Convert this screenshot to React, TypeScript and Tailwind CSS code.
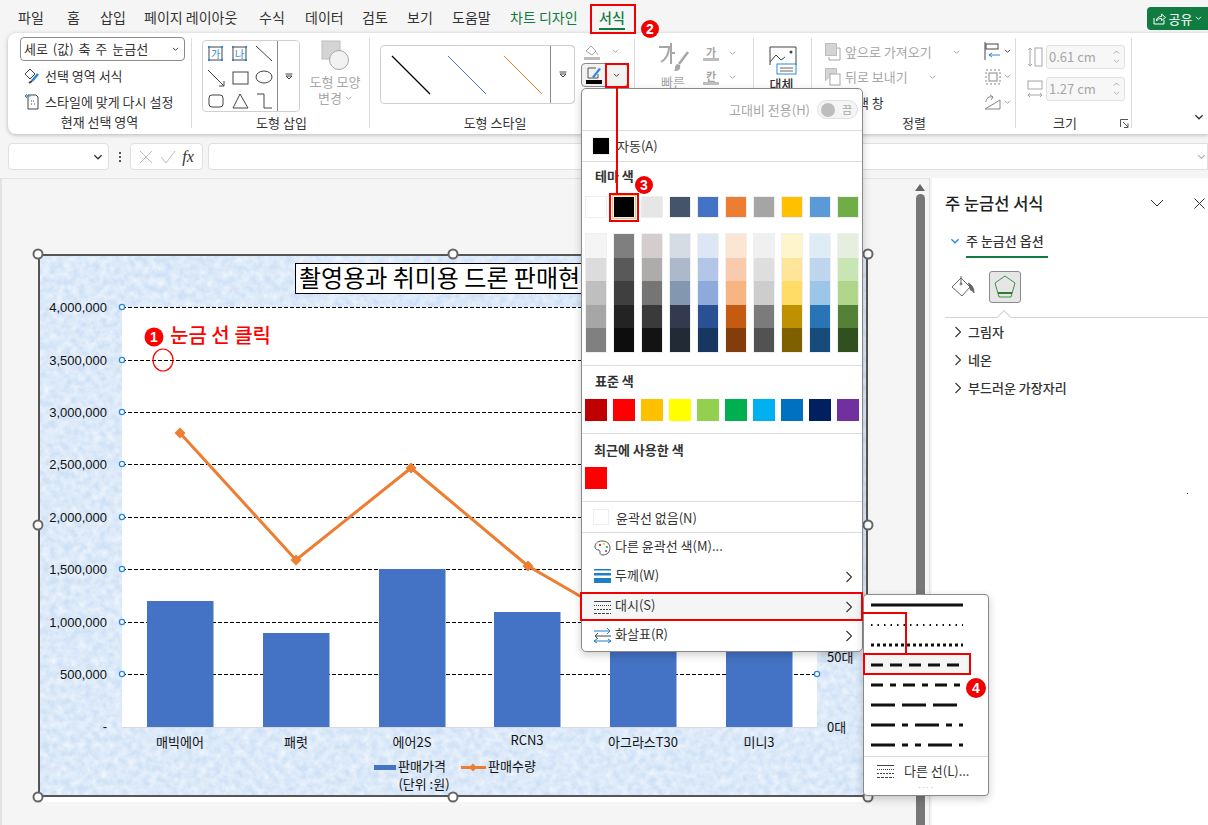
import React from "react";

const TINTS = [
  ["#f5f5f5", "#dcdcdc", "#bfbfbf", "#a6a6a6", "#808080"],
  ["#7f7f7f", "#595959", "#3f3f3f", "#232323", "#0d0d0d"],
  ["#d5cdcd", "#aeabab", "#757575", "#3a3a3a", "#131313"],
  ["#d6dce4", "#adb9ca", "#8497b0", "#333a4f", "#222b35"],
  ["#dce6f5", "#b4c6e7", "#8eaadb", "#2a5094", "#173660"],
  ["#fde5d5", "#f7cbac", "#f8b584", "#c55a11", "#833c0b"],
  ["#f0f0f0", "#dedede", "#cdcdcd", "#7b7b7b", "#525252"],
  ["#fff5cc", "#ffe599", "#ffdc66", "#bf9000", "#7f6000"],
  ["#deecf6", "#bdd6ee", "#9cc6e8", "#2874b5", "#174b7c"],
  ["#e6efdf", "#c8e6b3", "#b0d68b", "#538135", "#305020"],
];
const THEME = ["#ffffff", "#000000", "#e7e6e6", "#44546a", "#4472c4", "#ed7d31", "#a5a5a5", "#ffc000", "#5b9bd5", "#70ad47"];
const STD = ["#c00000", "#ff0000", "#ffc000", "#ffff00", "#92d050", "#00b050", "#00b0f0", "#0070c0", "#002060", "#7030a0"];
const TABS: [string, string][] = [
  ["파일", "w-[49px]"], ["홈", "w-[33px]"], ["삽입", "w-[44px]"], ["페이지 레이아웃", "w-[115px]"], ["수식", "w-[46px]"],
  ["데이터", "w-[57px]"], ["검토", "w-[45px]"], ["보기", "w-[45px]"], ["도움말", "w-[58px]"],
];

const Chev = ({ c = "#666", w = 8 }: { c?: string; w?: number }) => (
  <svg width={w} height={w * 0.6} viewBox="0 0 8 5" className="shrink-0">
    <path d="M1 1l3 3 3-3" fill="none" stroke={c} strokeWidth="1.1" />
  </svg>
);
const Right = () => (
  <svg width="8" height="12" viewBox="0 0 8 12" className="shrink-0">
    <path d="M1.5 1l5 5-5 5" fill="none" stroke="#333" strokeWidth="1.1" />
  </svg>
);
const Badge = ({ n, className }: { n: string; className: string }) => (
  <div className={`absolute w-[18px] h-[18px] rounded-full bg-[#f00000] text-white text-[14px] font-bold leading-[18px] text-center ${className}`} style={{ fontFamily: "'Liberation Sans',sans-serif" }}>
    {n}
  </div>
);
const Label = ({ children, w }: { children: React.ReactNode; w?: string }) => (
  <div className={`h-4 leading-4 text-center text-[13px] text-[#333] shrink-0 ${w ?? ""}`}>{children}</div>
);

const MoreBtn = ({ className }: { className: string }) => (
  <div className={`border border-[#8a8a8a] rounded-r-[4px] flex items-center justify-center bg-white ${className}`}>
    <svg width="8" height="7" viewBox="0 0 8 7"><path d="M0.5 1h7" stroke="#444" /><path d="M1 3l3 3 3-3z" fill="none" stroke="#444" /></svg>
  </div>
);

const ShapeGallery = () => (
  <svg width="74" height="72" viewBox="203 40 74 72" className="shrink-0">
    <g fill="none" stroke="#444" strokeWidth="1">
      <rect x="209" y="46" width="13" height="13" /><rect x="233" y="46" width="13" height="13" />
      <path d="M256 45l16 15" />
      <path d="M208 69l16 16" /><path d="M224 85v-5M224 85h-5" />
      <rect x="233" y="71" width="15" height="12" />
      <ellipse cx="264" cy="76" rx="8" ry="6" />
      <rect x="209" y="94" width="14" height="12" rx="3" />
      <path d="M240 93l-7 14h15z" />
      <path d="M257 93h7v14h8" />
    </g>
    <g fill="#2b88d8">
      {[[209, 46], [222, 46], [209, 59], [222, 59], [233, 46], [246, 46], [233, 59], [246, 59]].map(([x, y], i) => (
        <rect key={i} x={x - 1} y={y - 1} width="2" height="2" />
      ))}
    </g>
    <text x="215.500" y="56.500" fontSize="10" fill="#2b88d8" textAnchor="middle">가</text>
    <text x="239.500" y="56.500" fontSize="10" fill="#2b88d8" textAnchor="middle">나</text>
  </svg>
);

const ChartSvg = () => {
  const grid = [307, 360, 412, 464, 517, 569, 622, 674];
  const labels = ["4,000,000", "3,500,000", "3,000,000", "2,500,000", "2,000,000", "1,500,000", "1,000,000", "500,000"];
  const bars = [[147, 601, "매빅에어", 180], [263, 633, "패럿", 296], [379, 569, "에어2S", 412], [494, 612, "RCN3", 527], [610, 640, "아그라스T30", 643], [726, 640, "미니3", 759]] as const;
  const pts = [[180, 433], [296, 560], [411, 468], [528, 566], [644, 633]];
  return (
    <svg width="830" height="543" viewBox="38 254 830 543" className="block">
      <defs>
        <filter id="tex" x="0" y="0" width="100%" height="100%">
          <feTurbulence type="fractalNoise" baseFrequency="0.14" numOctaves="3" seed="7" />
          <feColorMatrix values="0 0 0 0 1  0 0 0 0 1  0 0 0 0 1  1.0 0 0 0 -0.2" />
        </filter>
      </defs>
      <rect x="38" y="254" width="830" height="543" fill="#cde0f6" />
      <rect x="38" y="254" width="830" height="543" filter="url(#tex)" />
      <rect x="122" y="307" width="695" height="420" fill="#fff" />
      <g stroke="#000" strokeWidth="1" strokeDasharray="4 2">
        {grid.map((y) => <line key={y} x1="122" x2="817" y1={y + 0.5} y2={y + 0.5} />)}
      </g>
      <line x1="122" x2="817" y1="727.500" y2="727.500" stroke="#d9d9d9" />
      {bars.map(([x, y]) => <rect key={x} x={x} y={y} width="66.500" height={727 - y} fill="#4472c4" />)}
      <polyline points={pts.map((p) => p.join(",")).join(" ")} fill="none" stroke="#ed7d31" strokeWidth="3" />
      {pts.map(([x, y]) => <path key={x} d={`M${x} ${y - 5.5}l5.5 5.5-5.500 5.500-5.500-5.500z`} fill="#ed7d31" />)}
      <g fontSize="13" fill="#111" textAnchor="end" fontFamily="'Liberation Sans',sans-serif">
        {labels.map((l, i) => <text key={l} x="107" y={grid[i] + 5}>{l}</text>)}
        <text x="107" y="731">-</text>
      </g>
      <g fill="#fff" stroke="#2b88d8" strokeWidth="1.300">
        {grid.map((y) => <circle key={y} cx="122" cy={y} r="2.600" />)}
        <circle cx="817" cy="674" r="2.600" />
      </g>
      <g fontSize="13" fill="#111" textAnchor="middle" fontFamily="'Noto Sans CJK KR',sans-serif">
        {bars.map(([x, , t, c]) => <text key={x} x={c} y={t === "RCN3" ? 745 : 747}>{t}</text>)}
        <text x="422" y="771">판매가격</text>
        <text x="424" y="789">(단위 :원)</text>
        <text x="512" y="771">판매수량</text>
      </g>
      <g fontSize="13" fill="#111" fontFamily="'Noto Sans CJK KR',sans-serif">
        <text x="827" y="662">50대</text>
        <text x="827" y="732">0대</text>
      </g>
      <rect x="374" y="765" width="22" height="5" fill="#4472c4" />
      <rect x="461" y="766" width="25" height="3" fill="#ed7d31" />
      <path d="M473 763.500l4 4-4 4-4-4z" fill="#ed7d31" />
      <rect x="295.500" y="263.500" width="330" height="30" fill="#fff" stroke="#000" />
      <text x="299" y="287" fontSize="24" fill="#000" fontFamily="'Noto Sans CJK KR',sans-serif">촬영용과 취미용 드론 판매현황</text>
      <circle cx="154" cy="337" r="9.500" fill="#f00" />
      <text x="154" y="342" fontSize="14" fontWeight="700" fill="#fff" textAnchor="middle" fontFamily="'Liberation Sans',sans-serif">1</text>
      <text x="170" y="343" fontSize="20" fontWeight="500" fill="#f00" fontFamily="'Noto Sans CJK KR',sans-serif">눈금 선 클릭</text>
      <ellipse cx="163" cy="360" rx="10" ry="11" fill="none" stroke="#f00" strokeWidth="1.200" />
      <rect x="39" y="255" width="828" height="541" fill="none" stroke="#555" strokeWidth="2" />
    </svg>
  );
};

const Handle = ({ className }: { className: string }) => (
  <div className={`absolute w-[11px] h-[11px] rounded-full bg-white border-2 border-[#666] -translate-x-1/2 -translate-y-1/2 ${className}`} />
);

const Dash = ({ d, w = 3 }: { d?: string; w?: number }) => (
  <div className="h-5 flex items-center pl-[6px]">
    <svg width="94" height="4" viewBox="0 0 94 4"><line x1="1" x2="93" y1="2" y2="2" stroke="#111" strokeWidth={w} strokeDasharray={d} /></svg>
  </div>
);

const MenuRow = ({ icon, text, arrow, hi }: { icon: React.ReactNode; text: string; arrow?: boolean; hi?: boolean }) => (
  <div className={`h-[29.500px] flex items-center pl-[12px] pr-[9px] text-[13px] text-[#333] ${hi ? "bg-[#f5f5f5]" : ""}`}>
    <div className="w-[21px] flex justify-start shrink-0">{icon}</div>
    <span className="-mt-[4px] flex-1">{text}</span>
    {arrow && <Right />}
  </div>
);

const DashIcon = () => (
  <svg width="17" height="14" viewBox="0 0 17 14"><g stroke="#444"><path d="M0 1.500h17" /><path d="M0 5.500h17" strokeDasharray="1 1" /><path d="M0 9.500h17" strokeDasharray="2 1" /><path d="M0 13.500h17" strokeDasharray="3 1" /></g></svg>
);

export default function App() {
  return (
    <div className="relative w-[1208px] h-[825px] overflow-hidden bg-[#f5f5f5] text-[#333] text-[13px]" style={{ fontFamily: "'Noto Sans CJK KR','Noto Sans',sans-serif" }}>
      {/* tabs */}
      <div className="h-[33px] flex items-start text-[14px] pl-[18px] pt-[8px] leading-[19px]">
        {TABS.map(([t, w]) => <span key={t} className={`text-[#333] whitespace-nowrap ${w}`}>{t}</span>)}
        <span className="text-[#107c41] w-[89px] whitespace-nowrap">차트 디자인</span>
        <div className="relative text-[#107c41] font-medium">
          서식
          <div className="h-[2px] bg-[#107c41] mt-[1px]" />
        </div>
        <div className="ml-auto -mt-[1px] w-[61px] h-[23px] bg-[#107c41] rounded-l-[4px] flex items-center justify-center gap-[3px] text-white text-[13px]">
          <svg width="13" height="13" viewBox="0 0 13 13" fill="none" stroke="#fff"><path d="M1 6v6h10V8" /><path d="M3.500 9c0-3 2-4.500 5-4.500V2l4 3.500-4 3V6.500c-2 0-4 .5-5 2.500z" /></svg>
          공유
          <Chev c="#fff" w={7} />
        </div>
      </div>

      {/* ribbon */}
      <div className="ml-[8px] h-[101px] bg-white rounded-l-[8px] shadow-[0_1px_4px_rgba(0,0,0,0.25)] flex pt-[5px]">
        <div className="w-[184px] h-[90px] border-r border-[#dcdcdc] flex flex-col">
          <div className="h-[77px] shrink-0 pl-[12px] flex flex-col -mt-[1px]">
            <div className="w-[165px] h-[24px] border border-[#8a8a8a] rounded-[4px] flex items-center justify-between px-[3px] pr-[5px] text-[13px] shrink-0">
              <span className="[word-spacing:2px]">세로 (값) 축 주 눈금선</span><Chev c="#333" w={7} />
            </div>
            <div className="h-[26px] mt-[2px] flex items-center gap-[5px] pl-[4px]">
              <svg width="16" height="16" viewBox="0 0 16 16" fill="none" stroke="#444"><path d="M1 6l5-5 5 5-5 5z" /><path d="M8 13l6-7" stroke="#2b88d8" strokeWidth="2.500" /><path d="M5 15l3-2" stroke="#444" strokeWidth="2" /></svg>
              <span>선택 영역 서식</span>
            </div>
            <div className="h-[26px] flex items-center gap-[5px] pl-[4px]">
              <svg width="16" height="18" viewBox="0 0 16 18" fill="none" stroke="#444"><path d="M4 3h8l2 2v12H4z" /><path d="M1 4h6M1 4l2-2M1 4l2 2" stroke="#2b88d8" /><path d="M7 9h4M7 12h1M10 12h2" strokeDasharray="1 1" /></svg>
              <span>스타일에 맞게 다시 설정</span>
            </div>
          </div>
          <Label>현재 선택 영역</Label>
        </div>

        <div className="w-[178px] h-[90px] border-r border-[#dcdcdc] flex flex-col">
          <div className="h-[77px] shrink-0 flex pl-[11px] pt-[2px]">
            <div className="w-[98px] h-[72px] flex rounded-[4px] border border-[#d0d0d0] overflow-hidden -ml-px">
              <ShapeGallery />
              <MoreBtn className="w-[24px] h-[72px] -mt-px shrink-0" />
            </div>
            <div className="w-[66px] ml-[2px] flex flex-col items-center text-[#a6a6a6]">
              <svg width="28" height="30" viewBox="0 0 28 30"><rect x="1" y="1" width="18" height="18" fill="#d4d4d4" stroke="#bdbdbd" /><circle cx="18" cy="20" r="9.500" fill="#f2f2f2" stroke="#a6a6a6" /></svg>
              <div className="leading-[16px] text-center mt-[4px] whitespace-nowrap flex flex-col items-center">
                <span>도형 모양</span>
                <span className="flex items-center gap-[3px]">변경 <Chev c="#aaa" w={7} /></span>
              </div>
            </div>
          </div>
          <Label w="w-[165px] pl-[14px]">도형 삽입</Label>
        </div>

        <div className="w-[265px] h-[90px] border-r border-[#dcdcdc] flex flex-col">
          <div className="h-[77px] shrink-0 flex pl-[10px] pt-[7px]">
            <div className="w-[195px] h-[59px] border border-[#d0d0d0] rounded-[4px] flex overflow-hidden">
              <svg width="170" height="57" viewBox="380 46 170 57" className="shrink-0">
                <path d="M391 56l38 38" stroke="#000" strokeWidth="1.300" />
                <path d="M447 56l38 38" stroke="#4472c4" />
                <path d="M503 56l38 38" stroke="#ed7d31" />
              </svg>
              <MoreBtn className="flex-1 -m-px" />
            </div>
            <div className="ml-[6px] w-[47px] -mt-[3px]">
              <div className="h-[19px] flex items-center gap-[12px] pl-[3px]">
                <svg width="16" height="16" viewBox="0 0 16 16" fill="none"><path d="M2 7l5-5 5 5-4 4z" stroke="#a6a6a6" /><path d="M12 8c1 1.500 2 3 1 3" stroke="#a6a6a6" /><rect y="13" width="16" height="3" fill="#bdbdbd" stroke="none" /></svg>
                <Chev c="#999" w={7} />
              </div>
              <div className="h-[24px] mt-[2px] w-[47px] border border-[#8a8a8a] rounded-[4px] flex bg-[#f2f2f2]">
                <div className="w-[23px] flex items-center justify-center">
                  <svg width="16" height="18" viewBox="0 0 16 18" fill="none"><path d="M2 2h8M2 2v10h10V8" stroke="#555" /><path d="M6 11l7-9 2 1-7 9z" fill="#2b88d8" /><rect y="14" width="16" height="4" fill="#000" /></svg>
                </div>
                <div className="flex-1 flex items-center justify-center"><Chev c="#333" w={7} /></div>
              </div>
            </div>
          </div>
          <Label w="w-[250px]">도형 스타일</Label>
        </div>

        <div className="w-[119px] h-[90px] border-r border-[#dcdcdc] flex text-[#a6a6a6] pl-[20px]">
          <div className="w-[36px] flex flex-col items-center pt-[4px]">
            <svg width="32" height="30" viewBox="0 0 32 30" fill="none" stroke="#a6a6a6" strokeWidth="2"><path d="M2 5h10c0 8-3 12-8 15M14 1v21M14 11h4" /><path d="M22 22l9-12" strokeWidth="2.500" /><path d="M17 29c5 0 7-2 6-6l-3-1c-3 2-1 5-3 7z" fill="#a6a6a6" stroke="none" /></svg>
            <span className="mt-[1px] leading-[18px]">빠른</span>
          </div>
          <div className="ml-[12px] pt-[6px] flex flex-col gap-[6px]">
            {["가", "칸"].map((t, i) => (
              <div key={i} className="h-[18px] flex items-center gap-[10px]">
                <div className="w-[16px] text-center leading-[12px] text-[11px] border-b-[3px] border-[#bdbdbd] font-bold">{t}</div>
                <Chev c="#999" w={7} />
              </div>
            ))}
          </div>
        </div>

        <div className="w-[58px] h-[90px] border-r border-[#dcdcdc] flex flex-col items-center pt-[7px] pr-[2px]">
          <svg width="30" height="30" viewBox="0 0 30 30" fill="none"><path d="M3 20V2h26v18h-8" stroke="#444" /><path d="M3 17l6-7 5 5 4-3" stroke="#444" /><circle cx="24" cy="7" r="1.500" fill="#444" /><rect x="10" y="19" width="19" height="10" fill="#fff" stroke="#2b88d8" /><path d="M13 23h13M13 26h13" stroke="#666" /></svg>
          <span className="mt-[1px] font-medium leading-[16px]">대체</span>
        </div>

        <div className="w-[204px] h-[90px] border-r border-[#dcdcdc] flex flex-col">
          <div className="h-[77px] shrink-0 flex text-[#a6a6a6] pl-[13px] pt-[1px]">
            <div className="w-[147px] flex flex-col">
              <div className="h-[26px] flex items-center gap-[4px]">
                <svg width="16" height="18" viewBox="0 0 16 18"><rect x="0.500" y="0.500" width="11" height="12" fill="#d4d4d4" stroke="#bdbdbd" /><path d="M12 5h3v12H4v-3" fill="none" stroke="#a6a6a6" /></svg>
                <span className="w-[88px] whitespace-nowrap">앞으로 가져오기</span><span className="ml-[16px]"><Chev c="#999" w={7} /></span>
              </div>
              <div className="h-[26px] flex items-center gap-[4px]">
                <svg width="16" height="18" viewBox="0 0 16 18"><path d="M0.500 13V0.500h11V5" fill="#d4d4d4" stroke="#bdbdbd" /><rect x="5" y="6" width="10" height="11" fill="#fff" stroke="#a6a6a6" /></svg>
                <span className="w-[64px] whitespace-nowrap">뒤로 보내기</span><span className="ml-[16px]"><Chev c="#999" w={7} /></span>
              </div>
              <div className="h-[26px] flex items-center text-[#333] pl-[20px]">선택 창</div>
            </div>
            <div className="flex flex-col pl-[12px] -mt-[1px]">
              {[
                <svg key="a" width="18" height="20" viewBox="0 0 18 20" fill="none"><path d="M1 1v18" stroke="#444" /><rect x="2" y="3" width="12" height="5" stroke="#444" /><path d="M16 14H5M5 14l3-2M5 14l3 2" stroke="#2b88d8" /></svg>,
                <svg key="b" width="18" height="18" viewBox="0 0 18 18" fill="none" stroke="#888"><rect x="2" y="2" width="14" height="14" strokeDasharray="2 2" /><rect x="5" y="5" width="8" height="8" /></svg>,
                <svg key="c" width="18" height="18" viewBox="0 0 18 18" fill="none" stroke="#888"><path d="M1 16L16 7v9z" /><path d="M2 9c0-4 3-6 7-5M9 4L6 2M9 4L7 7" /></svg>,
              ].map((ic, i) => (
                <div key={i} className="h-[26px] flex items-center gap-[2px]">{ic}<Chev c={i === 0 ? "#333" : "#999"} w={7} /></div>
              ))}
            </div>
          </div>
          <Label w="w-[204px]">정렬</Label>
        </div>

        <div className="relative w-[116px] h-[90px] border-r border-[#dcdcdc] flex flex-col">
          <div className="h-[77px] shrink-0 pl-[11px] pt-[7px] flex flex-col gap-[8px]">
            {["0.61 cm", "1.27 cm"].map((t, i) => (
              <div key={t} className="h-[24px] flex items-center gap-[3px] text-[#a6a6a6]">
                <svg width="16" height="20" viewBox="0 0 16 20" fill="none" stroke="#a6a6a6">
                  {i === 0 ? (<><rect x="8" y="1" width="7" height="18" /><path d="M3 1v18M1 3l2-2 2 2M1 17l2 2 2-2" /></>) : (<><rect x="1" y="2" width="14" height="8" /><path d="M1 16h14M3 14l-2 2 2 2M13 14l2 2-2 2" /></>)}
                </svg>
                <div className="w-[79px] h-[24px] border border-[#e0e0e0] bg-[#f7f7f7] rounded-[3px] flex items-center justify-between pl-[2px] pr-[4px]">
                  <span>{t}</span>
                  <div className="flex flex-col gap-[5px]"><svg width="7" height="4" viewBox="0 0 7 4"><path d="M1 3.500l2.500-2.500 2.500 2.500" fill="none" stroke="#aaa" /></svg><Chev c="#aaa" w={7} /></div>
                </div>
              </div>
            ))}
          </div>
          <Label w="w-[98px]">크기</Label>
          <svg className="absolute left-[104px] top-[81px]" width="9" height="9" viewBox="0 0 9 9" fill="none" stroke="#555"><path d="M.5 8V.5H8M3 3l5 5M8 4.500V8.500H4" /></svg>
        </div>
        <div className="flex-1 flex justify-end items-end pb-[8px] pr-[4px] h-[90px]"><Chev c="#333" w={10} /></div>
      </div>

      {/* formula bar */}
      <div className="mt-[9px] h-[27px] flex items-stretch">
        <div className="ml-[8px] w-[101px] bg-white border border-[#e0e0e0] rounded-[4px] flex items-center justify-end pr-[5px]"><Chev c="#333" w={10} /></div>
        <div className="w-[21px] flex items-center justify-center"><div className="w-[2px] h-[10px] border-y-2 border-[#555] relative"><div className="h-[2px] mt-[2px] bg-[#555]" /></div></div>
        <div className="w-[73px] bg-white border border-[#e0e0e0] rounded-[4px] flex items-center justify-around px-[5px]">
          <svg width="14" height="14" viewBox="0 0 14 14" stroke="#bdbdbd" fill="none"><path d="M1 1l12 12M13 1L1 13" /></svg>
          <svg width="16" height="14" viewBox="0 0 16 14" stroke="#bdbdbd" fill="none"><path d="M1 7l5 6L15 1" /></svg>
          <span className="italic text-[16px] text-[#333]" style={{ fontFamily: "'Liberation Serif',serif" }}>fx</span>
        </div>
        <div className="ml-[5px] flex-1 bg-white border border-[#e0e0e0] rounded-l-[4px] flex items-center justify-end pr-[1px]"><Chev c="#aaa" w={9} /></div>
      </div>

      {/* main */}
      <div className="mt-[8px] h-[647px] flex">
        <div className="w-[910px] border-l-2 border-[#e2e2e2] pl-[36px] pt-[75px] border-t border-t-[#e2e2e2]">
          <div className="relative w-[830px]">
            <ChartSvg />
            <div className="w-[830px] h-[5px] bg-white" />
            <Handle className="left-0 top-0" />
            <Handle className="left-[415px] top-0" />
            <Handle className="left-[830px] top-0" />
            <Handle className="left-0 top-[271px]" />
            <Handle className="left-[830px] top-[271px]" />
            <Handle className="left-0 top-[543px]" />
            <Handle className="left-[415px] top-[543px]" />
            <Handle className="left-[830px] top-[543px]" />
          </div>
        </div>
        <div className="w-[20px] flex flex-col items-center pt-[5px] gap-[3px] border-t border-[#e2e2e2] mr-[2px] shrink-0 border-r border-r-[#dedede]">
          <svg width="10" height="7" viewBox="0 0 10 7"><path d="M5 0l5 7H0z" fill="#666" /></svg>
          <div className="w-[9px] flex-1 bg-[#777] rounded-t-[5px] translate-x-[1px]" />
        </div>
        <div className="relative flex-1 bg-white pt-[14px] pl-[13px]">
          <div className="flex items-center h-[22px]">
            <span className="text-[16.500px] text-[#222] font-medium w-[205px] whitespace-nowrap">주 눈금선 서식</span>
            <svg width="14" height="8" viewBox="0 0 14 8" fill="none" stroke="#333"><path d="M1 1l6 6 6-6" /></svg>
            <svg className="ml-[30px]" width="11" height="11" viewBox="0 0 11 11" fill="none" stroke="#333"><path d="M.5.500l10 10M10.500.500l-10 10" /></svg>
          </div>
          <div className="flex mt-[18px] items-start">
            <div className="pt-[6px] w-[21px] pl-[5px]"><Chev c="#2b88d8" w={10} /></div>
            <div className="font-medium text-[13px] text-[#333] leading-[18px] border-b-2 border-[#107c41] pb-[6px] w-[82px] whitespace-nowrap">주 눈금선 옵션</div>
          </div>
          <div className="flex items-center mt-[13px] pl-[6px] gap-[14px] h-[32px]">
            <svg width="24" height="22" viewBox="0 0 24 22" fill="none" stroke="#666"><path d="M1 11l9-9 9 9-8 9z" /><path d="M10 2V0M10 2v6" /><circle cx="10" cy="8" r="1" /><path d="M17 7c3 1 6 4 6 10-2-3-3-3-4-3" fill="#666" /></svg>
            <div className="w-[32px] h-[32px] bg-[#e6e6e6] border border-[#8a8a8a] rounded-[3px] flex items-center justify-center">
              <svg width="22" height="24" viewBox="0 0 22 24" fill="none" stroke="#3f8f4f"><path d="M11 1l10 7-4 14H5L1 8z" /><path d="M4 18h14" strokeWidth="2" stroke="#2e7d32" /></svg>
            </div>
          </div>
          <div className="relative mt-[14px] border-t border-[#d4d4d4] h-0">
            <div className="absolute left-[54px] -top-[6px] w-[10px] h-[10px] rotate-45 bg-white border-l border-t border-[#d4d4d4]" />
          </div>
          {["그림자", "네온", "부드러운 가장자리"].map((t) => (
            <div key={t} className="h-[28px] flex items-center gap-[6px] pl-[9px] font-medium text-[13px] first:mt-[3px]"><Right />{t}</div>
          ))}
          <div className="absolute left-[255px] top-[315px] w-px h-px bg-[#333]" />
        </div>
      </div>

      {/* colour menu */}
      <div className="absolute left-[581px] top-[88px] w-[282px] h-[564px] bg-white border border-[#8a8a8a] rounded-[5px] shadow-[0_3px_8px_rgba(0,0,0,0.2)] z-10">
        <div className="h-[42px] border-b border-[#dedede] flex items-center justify-end pr-[4px] text-[13px] text-[#a6a6a6] gap-[7px]">
          <span>고대비 전용(H)</span>
          <div className="w-[41px] h-[19px] rounded-full border border-[#e0e0e0] bg-[#f5f5f5] flex items-center pl-[3px] gap-[7px]">
            <div className="w-[14px] h-[14px] rounded-full bg-[#bdbdbd]" /><span className="text-[11px]">끔</span>
          </div>
        </div>
        <div className="h-[31px] border-b border-[#dedede] flex items-center pl-[11px] gap-[8px]">
          <div className="w-[16px] h-[16px] bg-black border border-[#f0f0f0] box-content -m-px" /><span>자동(A)</span>
        </div>
        <div className="h-[26px] pl-[13px] pt-[5px] font-bold leading-[18px]">테마 색</div>
        <div className="grid grid-cols-[repeat(10,22px)] gap-x-[6px] pl-[3px] mt-[8px]">
          {THEME.map((c) => <div key={c} className="h-[22px] border border-[#eeeeee]" style={{ backgroundColor: c }} />)}
        </div>
        <div className="grid grid-cols-[repeat(10,22px)] gap-x-[6px] pl-[3px] mt-[15px]">
          {TINTS.map((col, i) => (
            <div key={i} className="border border-[#f0f0f0]">
              {col.map((c) => <div key={c} className="h-[23.600px]" style={{ backgroundColor: c }} />)}
            </div>
          ))}
        </div>
        <div className="mt-[12px] border-t border-[#dedede] h-[34px] pl-[13px] pt-[6px] font-bold leading-[18px]">표준 색</div>
        <div className="grid grid-cols-[repeat(10,22px)] gap-x-[6px] pl-[3px]">
          {STD.map((c) => <div key={c} className="h-[22px]" style={{ backgroundColor: c }} />)}
        </div>
        <div className="mt-[12px] border-t border-[#dedede] h-[34px] pl-[12px] pt-[7px] font-bold leading-[18px]">최근에 사용한 색</div>
        <div className="pl-[3px]"><div className="w-[22px] h-[22px] bg-[#ff0000]" /></div>
        <div className="mt-[12px] border-t border-[#dedede] h-[31px] flex items-center pl-[11px] gap-[7px] pt-[1px]">
          <div className="w-[16px] h-[16px] border border-[#eeeeee]" /><span>윤곽선 없음(N)</span>
        </div>
        <div className="border-t border-[#dedede]">
          <MenuRow text="다른 윤곽선 색(M)..." icon={
            <svg width="17" height="16" viewBox="0 0 17 16"><path d="M8 1C3 1 1 4 1 7c0 2 2 3 4 3 1 0 1 2 1 3s1 2 3 2c4 0 7-3 7-7s-3-7-8-7z" fill="#fff" stroke="#555" /><circle cx="6" cy="5" r="1" fill="#c00000" /><circle cx="10" cy="4" r="1" fill="#ffc000" /><circle cx="13" cy="7" r="1" fill="#00b050" /><circle cx="12" cy="11" r="1" fill="#7030a0" /></svg>
          } />
          <MenuRow text="두께(W)" arrow icon={<svg width="17" height="16" viewBox="0 0 17 16"><g fill="#1e7fc4"><rect width="17" height="1.500" /><rect y="4" width="17" height="2.500" /><rect y="9" width="17" height="5" /></g></svg>} />
          <MenuRow text="대시(S)" arrow hi icon={<DashIcon />} />
          <MenuRow text="화살표(R)" arrow icon={<svg width="17" height="16" viewBox="0 0 17 16" fill="none" stroke="#1e7fc4"><path d="M0 3h16M13 0l3 3-3 3" /><path d="M17 8H1M4 5L1 8l3 3" stroke="#444" /><path d="M0 13h17M3 11l-3 2 3 2M14 11l3 2-3 2" /></svg>} />
        </div>
      </div>

      {/* dash menu */}
      <div className="absolute left-[863px] top-[594px] w-[126px] h-[202px] bg-white border border-[#8a8a8a] rounded-[4px] shadow-[0_3px_8px_rgba(0,0,0,0.2)] z-10">
        <Dash />
        <Dash d="1.500 5" w={2} />
        <Dash d="3 3" />
        <div className="bg-[#f5f5f5] w-[106px]"><Dash d="12 7" /></div>
        <Dash d="12 7 6 7" />
        <Dash d="24 7" />
        <Dash d="24 7 6 7" />
        <Dash d="24 7 6 7 6 7" />
        <div className="mt-[1px] border-t border-[#dedede] h-[28px] flex items-center pl-[13px] gap-[10px]">
          <DashIcon /><span>다른 선(L)...</span>
        </div>
        <div className="text-center text-[#bbbbbb] text-[9px] leading-[6px] tracking-[1px]" style={{ fontFamily: "'Liberation Sans',sans-serif" }}>····</div>
      </div>

      {/* red call-outs */}
      <div className="absolute z-20 left-[590px] top-[4px] w-[46px] h-[30px] border-2 border-[#f00000]" />
      <div className="absolute z-20 left-[605px] top-[63px] w-[24px] h-[25px] border-2 border-[#f00000]" />
      <div className="absolute z-20 left-[616px] top-[87px] w-[2px] h-[106px] bg-[#f00000]" />
      <div className="absolute z-20 left-[612px] top-[195px] w-[24px] h-[24px] border border-[#f6c26b]" />
      <div className="absolute z-20 left-[609px] top-[193px] w-[30px] h-[29px] border-2 border-[#f00000]" />
      <div className="absolute z-20 left-[580px] top-[592px] w-[283px] h-[29px] border-2 border-[#f00000]" />
      <div className="absolute z-20 left-[863px] top-[653px] w-[108px] h-[22px] border-2 border-[#f00000]" />
      <div className="absolute z-20 left-[862px] top-[612px] w-[45px] h-[42px] border-t-2 border-r-2 border-[#f00000]" />
      <Badge n="2" className="z-20 left-[641px] top-[20px]" />
      <Badge n="3" className="z-20 left-[635px] top-[176px]" />
      <Badge n="4" className="z-20 left-[966px] top-[678px] !w-5 !h-5 !leading-5" />
    </div>
  );
}
